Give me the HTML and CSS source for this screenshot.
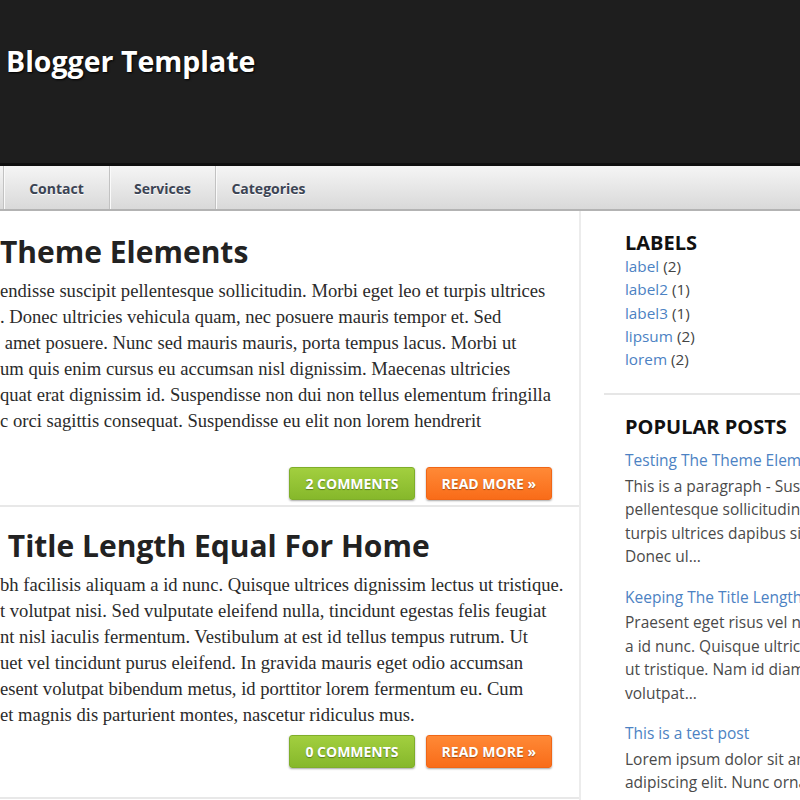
FILE: index.html
```html
<!DOCTYPE html>
<html lang="en">
<head>
    <meta charset="utf-8" />
    <meta name="viewport" content="width=device-width, initial-scale=1" />
    <title>Blogger Template</title>
    <link rel="stylesheet" href="styles.css">
</head>
<body>
    <!--dark header with the blog name-->
    <div class="header">
        <h1 class="blog-title">Blogger Template</h1>
    </div>

    <!--page menu-->
    <div class="nav">
        <a class="nav-item" href="#">Contact</a>
        <a class="nav-item" href="#">Services</a>
        <a class="nav-item" href="#">Categories</a>
    </div>

    <div class="page">
        <div class="main">
            <div class="post first">
                <h2 class="post-title">Theme Elements</h2>
                <p class="post-body">endisse suscipit pellentesque sollicitudin. Morbi eget leo et turpis ultrices<br>
                . Donec ultricies vehicula quam, nec posuere mauris tempor et. Sed<br>
                &nbsp;amet posuere. Nunc sed mauris mauris, porta tempus lacus. Morbi ut<br>
                um quis enim cursus eu accumsan nisl dignissim. Maecenas ultricies<br>
                quat erat dignissim id. Suspendisse non dui non tellus elementum fringilla<br>
                c orci sagittis consequat. Suspendisse eu elit non lorem hendrerit<br>
                &nbsp;</p>
                <div class="post-footer">
                    <a class="btn btn-green" href="#">2 Comments</a>
                    <a class="btn btn-orange" href="#">Read More &raquo;</a>
                </div>
            </div>

            <div class="post">
                <h2 class="post-title">&nbsp;Title Length Equal For Home</h2>
                <p class="post-body">bh facilisis aliquam a id nunc. Quisque ultrices dignissim lectus ut tristique.<br>
                t volutpat nisi. Sed vulputate eleifend nulla, tincidunt egestas felis feugiat<br>
                nt nisl iaculis fermentum. Vestibulum at est id tellus tempus rutrum. Ut<br>
                uet vel tincidunt purus eleifend. In gravida mauris eget odio accumsan<br>
                esent volutpat bibendum metus, id porttitor lorem fermentum eu. Cum<br>
                et magnis dis parturient montes, nascetur ridiculus mus.</p>
                <div class="post-footer">
                    <a class="btn btn-green" href="#">0 Comments</a>
                    <a class="btn btn-orange" href="#">Read More &raquo;</a>
                </div>
            </div>
        </div>

        <div class="sidebar">
            <div class="widget labels">
                <h2 class="widget-title">Labels</h2>
                <ul class="label-list">
                    <li><a href="#">label</a> <span class="count">(2)</span></li>
                    <li><a href="#">label2</a> <span class="count">(1)</span></li>
                    <li><a href="#">label3</a> <span class="count">(1)</span></li>
                    <li><a href="#">lipsum</a> <span class="count">(2)</span></li>
                    <li><a href="#">lorem</a> <span class="count">(2)</span></li>
                </ul>
            </div>

            <div class="widget popular">
                <h2 class="widget-title">Popular Posts</h2>
                <div class="popular-item">
                    <a class="popular-link" href="#">Testing The Theme Elements</a>
                    <p class="popular-text">This is a paragraph - Suspendisse suscipit<br>
                    pellentesque sollicitudin. Morbi eget leo et<br>
                    turpis ultrices dapibus sit amet posuere.<br>
                    Donec ul...</p>
                </div>
                <div class="popular-item">
                    <a class="popular-link" href="#">Keeping The Title Length Equal For Home</a>
                    <p class="popular-text">Praesent eget risus vel nibh facilisis aliquam<br>
                    a id nunc. Quisque ultrices dignissim lectus<br>
                    ut tristique. Nam id diam at volutpat nisi<br>
                    volutpat...</p>
                </div>
                <div class="popular-item">
                    <a class="popular-link" href="#">This is a test post</a>
                    <p class="popular-text">Lorem ipsum dolor sit amet, consectetur<br>
                    adipiscing elit. Nunc ornare...</p>
                </div>
            </div>
        </div>
    </div>
</body>
</html>
```

FILE: styles.css
```css
body{
    margin:0;
    width:800px;
    height:800px;
    overflow:hidden;
    background:#fff;
    font-family:"Open Sans", "Liberation Sans", sans-serif;
}
a{
    text-decoration:none;
}

/*header*/
.header{
    height:163px;
    background:#1e1e1e;
    border-bottom:3px solid #0f0f0f;
}
.blog-title{
    margin:0;
    padding:41px 0 0 6px;
    font-size:28.5px;
    line-height:40px;
    font-weight:700;
    color:#fff;
    text-shadow:1px 1px 2px #000;
}

/*menu bar*/
.nav{
    display:flex;
    height:43px;
    padding-left:3px;
    background:linear-gradient(#f5f5f5, #d9d9d9);
    border-bottom:2px solid #b3b3b3;
}
.nav-item{
    width:106px;
    box-sizing:border-box;
    padding-top:2px;
    border-left:1px solid #c2c2c2;
    box-shadow:inset 1px 0 0 #fafafa;
    text-align:center;
    line-height:41px;
    font-size:14px;
    font-weight:700;
    color:#3c4454;
    text-shadow:0 1px 0 #fff;
}

/*two columns*/
.page{
    display:flex;
}
.main{
    width:579px;
    border-right:2px solid #ececec;
}
.sidebar{
    flex:1;
    padding-top:20px;
    white-space:nowrap;
    overflow:hidden;
}

/*posts*/
.post{
    padding:21px 0 29px 0;
    border-bottom:2px solid #e8e8e8;
}
.post.first{
    padding:23px 0 5px 0;
}
.post-title{
    margin:0 0 8px 0;
    font-size:30px;
    line-height:36px;
    font-weight:700;
    color:#222;
    white-space:nowrap;
}
.post-body{
    margin:0;
    font-family:"Liberation Serif", serif;
    font-size:18.6px;
    line-height:26px;
    color:#2b2b2b;
    white-space:nowrap;
}
.post-footer{
    display:flex;
    justify-content:flex-end;
    gap:11px;
    padding-right:27px;
    margin-top:7px;
}
.btn{
    height:31px;
    line-height:31px;
    padding:0 15px;
    border-radius:3px;
    font-size:14px;
    font-weight:700;
    text-transform:uppercase;
    color:#fff;
    text-shadow:0 1px 1px rgba(0,0,0,0.35);
    box-shadow:0 1px 2px rgba(0,0,0,0.35);
}
.btn-green{
    background:linear-gradient(#a2cf3f, #86b82b);
    border:1px solid #7fae2a;
}
.btn-orange{
    background:linear-gradient(#ff8936, #f96c19);
    border:1px solid #f06616;
}

/*sidebar widgets*/
.widget{
    margin-left:23px;
    padding-left:21px;
}
.widget.labels{
    padding-bottom:22px;
    border-bottom:2px solid #e6e6e6;
}
.widget.popular{
    padding-top:20px;
}
.widget-title{
    margin:0;
    font-size:20px;
    line-height:24px;
    font-weight:700;
    color:#111;
    text-transform:uppercase;
}
.popular .widget-title{
    margin-bottom:10px;
}
.label-list{
    list-style:none;
    margin:0;
    padding:0;
    font-size:15.3px;
    line-height:23.3px;
}
.label-list a, .popular-link{
    color:#4c82c3;
}
.count{
    color:#444;
}
.popular-item{
    margin-bottom:17px;
}
.popular-link{
    display:block;
    font-size:15.5px;
    line-height:23.5px;
    margin-bottom:2px;
}
.popular-text{
    margin:0;
    font-size:15.5px;
    line-height:23.5px;
    color:#4a4a4a;
}
```
